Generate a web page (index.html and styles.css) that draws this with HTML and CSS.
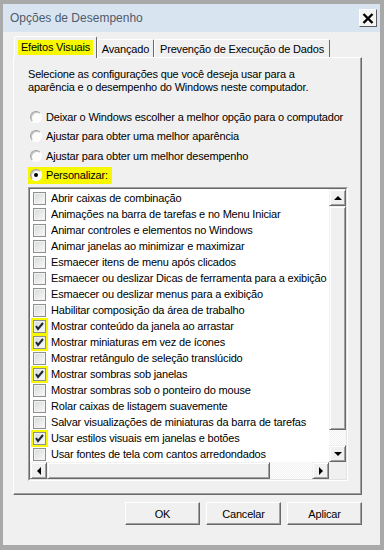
FILE: index.html
```html
<!DOCTYPE html>
<html lang="pt-BR">
<head>
    <meta charset="UTF-8">
    <title>Opções de Desempenho</title>
    <link rel="stylesheet" href="styles.css">
</head>
<body>
    <div class="window">
        <div class="titlebar">
            <span class="title">Opções de Desempenho</span>
            <span class="close">
                <svg width="12" height="11" viewBox="0 0 12 11"><path d="M1.5 1l9 9M10.5 1l-9 9" stroke="#000" stroke-width="2.4"/></svg>
            </span>
        </div>

        <div class="content">
            <div class="tabs">
                <div class="tab active"><span class="mark">Efeitos Visuais</span></div>
                <div class="tab tab-adv">Avançado</div>
                <div class="tab tab-dep">Prevenção de Execução de Dados</div>
            </div>

            <div class="panel">
                <p class="intro">Selecione as configurações que você deseja usar para a<br>aparência e o desempenho do Windows neste computador.</p>

                <div class="options">
                    <div class="opt"><span class="radio"></span>Deixar o Windows escolher a melhor opção para o computador</div>
                    <div class="opt"><span class="radio"></span>Ajustar para obter uma melhor aparência</div>
                    <div class="opt"><span class="radio"></span>Ajustar para obter um melhor desempenho</div>
                    <div class="opt"><span class="mark-row"><span class="radio on"></span>Personalizar:</span></div>
                </div>

                <div class="listbox">
                    <div class="listbox-inner">
                        <div class="list-top">
                            <ul class="items">
                                <li><span class="cbw"><span class="cb"></span></span>Abrir caixas de combinação</li>
                                <li><span class="cbw"><span class="cb"></span></span>Animações na barra de tarefas e no Menu Iniciar</li>
                                <li><span class="cbw"><span class="cb"></span></span>Animar controles e elementos no Windows</li>
                                <li><span class="cbw"><span class="cb"></span></span>Animar janelas ao minimizar e maximizar</li>
                                <li><span class="cbw"><span class="cb"></span></span>Esmaecer itens de menu após clicados</li>
                                <li><span class="cbw"><span class="cb"></span></span>Esmaecer ou deslizar Dicas de ferramenta para a exibição</li>
                                <li><span class="cbw"><span class="cb"></span></span>Esmaecer ou deslizar menus para a exibição</li>
                                <li><span class="cbw"><span class="cb"></span></span>Habilitar composição da área de trabalho</li>
                                <li><span class="cbw marked"><span class="cb"><svg width="11" height="11" viewBox="0 0 11 11"><path d="M2 5l2 3 5-6" fill="none" stroke="#1d2833" stroke-width="2"/></svg></span></span>Mostrar conteúdo da janela ao arrastar</li>
                                <li><span class="cbw marked"><span class="cb"><svg width="11" height="11" viewBox="0 0 11 11"><path d="M2 5l2 3 5-6" fill="none" stroke="#1d2833" stroke-width="2"/></svg></span></span>Mostrar miniaturas em vez de ícones</li>
                                <li><span class="cbw"><span class="cb"></span></span>Mostrar retângulo de seleção translúcido</li>
                                <li><span class="cbw marked"><span class="cb"><svg width="11" height="11" viewBox="0 0 11 11"><path d="M2 5l2 3 5-6" fill="none" stroke="#1d2833" stroke-width="2"/></svg></span></span>Mostrar sombras sob janelas</li>
                                <li><span class="cbw"><span class="cb"></span></span>Mostrar sombras sob o ponteiro do mouse</li>
                                <li><span class="cbw"><span class="cb"></span></span>Rolar caixas de listagem suavemente</li>
                                <li><span class="cbw"><span class="cb"></span></span>Salvar visualizações de miniaturas da barra de tarefas</li>
                                <li><span class="cbw marked"><span class="cb"><svg width="11" height="11" viewBox="0 0 11 11"><path d="M2 5l2 3 5-6" fill="none" stroke="#1d2833" stroke-width="2"/></svg></span></span>Usar estilos visuais em janelas e botões</li>
                                <li><span class="cbw"><span class="cb"></span></span>Usar fontes de tela com cantos arredondados</li>
                            </ul>
                            <div class="vscroll">
                                <span class="sb-btn"><span class="arr arr-up"></span></span>
                                <span class="vthumb"></span>
                                <span class="track"></span>
                                <span class="sb-btn"><span class="arr arr-down"></span></span>
                            </div>
                        </div>
                        <div class="list-bottom">
                            <div class="hscroll">
                                <span class="sb-btn"><span class="arr arr-left"></span></span>
                                <span class="hthumb"></span>
                                <span class="track"></span>
                                <span class="sb-btn"><span class="arr arr-right"></span></span>
                            </div>
                            <span class="corner"></span>
                        </div>
                    </div>
                </div>
            </div>

            <div class="buttons">
                <span class="btn">OK</span>
                <span class="btn">Cancelar</span>
                <span class="btn">Aplicar</span>
            </div>
        </div>
    </div>
</body>
</html>
```

FILE: styles.css
```css
body {
    margin: 0;
    background-color: #fff;
    font-family: "Liberation Sans", Arial, sans-serif;
    font-size: 11px;
    letter-spacing: -0.18px;
    color: #000;
}
.window {
    width: 377px;
    border: 4px solid #a9a9a9;
    border-left-width: 3px;
    border-bottom-width: 5px;
    background-color: #f0f0f0;
}
.titlebar {
    height: 28px;
    background-color: #d9e4f1;
    display: flex;
    align-items: center;
    justify-content: space-between;
    padding: 0 3px 0 7px;
}
.title {
    font-size: 12px;
    letter-spacing: 0;
    color: #4f5b68;
    padding-bottom: 1px;
}
.close {
    width: 18px;
    height: 18px;
    box-sizing: border-box;
    border: 1px solid;
    border-color: #fff #5c5c5c #5c5c5c #fff;
    background-color: #f4f4f4;
    display: flex;
    align-items: center;
    justify-content: center;
}
.content {
    padding: 4px 18px 20px 10px;
}
.tabs {
    display: flex;
    align-items: flex-end;
    height: 21px;
    padding-left: 1px;
}
.tab {
    height: 18px;
    box-sizing: border-box;
    border: 1px solid;
    border-color: #fff #696969 transparent #fff;
    border-bottom: none;
    border-radius: 2px 2px 0 0;
    display: flex;
    align-items: center;
    justify-content: center;
    white-space: nowrap;
}
.tab.active {
    width: 83px;
    height: 22px;
    margin-bottom: -1px;
    background-color: #f0f0f0;
    position: relative;
    z-index: 1;
    padding-bottom: 1px;
}
.tab-adv {
    width: 57px;
}
.tab-dep {
    width: 176px;
}
.mark {
    background-color: #f7f700;
    line-height: 15px;
    padding: 0 3px;
}
.panel {
    height: 438px;
    box-sizing: border-box;
    border: 1px solid;
    border-color: #fff #696969 #696969 #fff;
    box-shadow: inset -1px -1px #a0a0a0;
    padding: 10px 0 0 14px;
}
.intro {
    margin: 0;
    line-height: 13px;
}
.options {
    margin: 13px 0 0 2px;
}
.opt {
    height: 19.5px;
    display: flex;
    align-items: center;
    white-space: nowrap;
}
.radio {
    flex: none;
    width: 12px;
    height: 12px;
    box-sizing: border-box;
    border-radius: 50%;
    border: 1px solid;
    border-color: #a0a0a0 #fff #fff #a0a0a0;
    box-shadow: inset 1px 1px #c4c4c4;
    background-color: #fcfcfc;
    margin-right: 4px;
    display: flex;
    align-items: center;
    justify-content: center;
}
.radio.on::after {
    content: "";
    width: 4px;
    height: 4px;
    border-radius: 50%;
    background-color: #000;
}
.mark-row {
    display: flex;
    align-items: center;
    height: 17px;
    margin-left: -2px;
    padding: 0 4px 0 2px;
    background-color: #f7f700;
}
.listbox {
    margin-top: 2px;
    width: 320px;
    height: 294px;
    box-sizing: border-box;
    border: 1px solid;
    border-color: #a0a0a0 #fff #fff #a0a0a0;
}
.listbox-inner {
    height: 100%;
    box-sizing: border-box;
    border: 1px solid;
    border-color: #696969 #e3e3e3 #e3e3e3 #696969;
}
.list-top {
    display: flex;
    height: 273px;
}
.items {
    list-style: none;
    margin: 0;
    padding: 1px 0 0 1px;
    width: 299px;
    flex: none;
    box-sizing: border-box;
    background-color: #fff;
    overflow: hidden;
}
.items li {
    height: 16px;
    display: flex;
    align-items: center;
    white-space: nowrap;
}
.cbw {
    flex: none;
    width: 17px;
    height: 16px;
    display: flex;
    align-items: center;
    justify-content: center;
    margin-right: 3px;
}
.cbw.marked {
    background-color: #f7f700;
    height: 17px;
}
.cb {
    width: 13px;
    height: 13px;
    box-sizing: border-box;
    border: 1px solid #8e8f8f;
    background: linear-gradient(135deg, #d6d8db, #fafafa);
    box-shadow: inset 0 0 0 1px #f2f2f2;
    display: flex;
    align-items: center;
    justify-content: center;
}
.vscroll {
    width: 17px;
    display: flex;
    flex-direction: column;
}
.sb-btn {
    width: 17px;
    height: 17px;
    flex: none;
    box-sizing: border-box;
    background-color: #f0f0f0;
    border: 1px solid;
    border-color: #f0f0f0 #696969 #696969 #f0f0f0;
    box-shadow: inset 1px 1px #fff, inset -1px -1px #a0a0a0;
    display: flex;
    align-items: center;
    justify-content: center;
}
.vthumb, .hthumb {
    flex: none;
    box-sizing: border-box;
    background-color: #f0f0f0;
    border: 1px solid;
    border-color: #f0f0f0 #696969 #696969 #f0f0f0;
    box-shadow: inset 1px 1px #fff, inset -1px -1px #a0a0a0;
}
.vthumb {
    height: 224px;
}
.hthumb {
    width: 223px;
}
.track {
    flex: 1;
    background: repeating-conic-gradient(#f0f0f0 0 25%, #fff 0 50%) 0 0 / 2px 2px;
}
.arr {
    width: 0;
    height: 0;
}
.arr-up {
    border-left: 4px solid transparent;
    border-right: 4px solid transparent;
    border-bottom: 4px solid #000;
}
.arr-down {
    border-left: 4px solid transparent;
    border-right: 4px solid transparent;
    border-top: 4px solid #000;
}
.arr-left {
    border-top: 4px solid transparent;
    border-bottom: 4px solid transparent;
    border-right: 4px solid #000;
}
.arr-right {
    border-top: 4px solid transparent;
    border-bottom: 4px solid transparent;
    border-left: 4px solid #000;
}
.list-bottom {
    display: flex;
    height: 17px;
}
.hscroll {
    width: 299px;
    display: flex;
}
.corner {
    width: 17px;
    background-color: #f0f0f0;
}
.buttons {
    display: flex;
    justify-content: flex-end;
    gap: 6px;
    margin-top: 7px;
}
.btn {
    width: 75px;
    height: 23px;
    box-sizing: border-box;
    background-color: #f0f0f0;
    border: 1px solid;
    border-color: #fff #696969 #696969 #fff;
    box-shadow: inset -1px -1px #a0a0a0;
    display: flex;
    align-items: center;
    justify-content: center;
}
```
